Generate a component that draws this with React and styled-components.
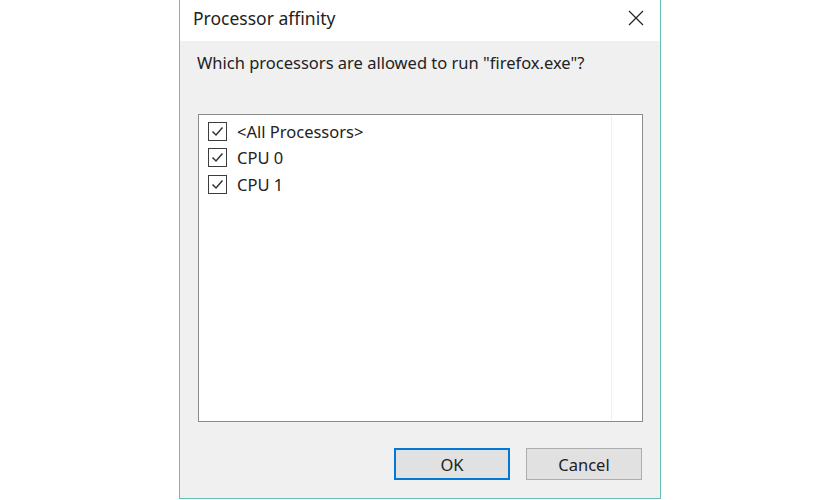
import React, { useState } from "react";
import styled, { createGlobalStyle } from "styled-components";

const GlobalStyle = createGlobalStyle`
  html, body {
    margin: 0;
    padding: 0;
    background: #ffffff;
  }
  body {
    font-family: "Noto Sans", "Open Sans", "Liberation Sans", sans-serif;
    color: #000;
  }
`;

const Page = styled.div`
  width: 840px;
  height: 500px;
  display: flex;
  justify-content: center;
  align-items: flex-start;
  overflow: hidden;
`;

const Dialog = styled.div`
  width: 480px;
  height: 498px;
  border: 1px solid #62c2b8;
  border-top: none;
  background: #f0f0f0;
  display: flex;
  flex-direction: column;
`;

const TitleBar = styled.div`
  height: 41px;
  background: #ffffff;
  display: flex;
  align-items: center;
  justify-content: space-between;
  padding: 0 15px 6px 13px;
  box-sizing: border-box;
`;

const Title = styled.span`
  font-size: 17.5px;
  color: #222;
`;

const CloseButton = styled.button`
  border: none;
  background: transparent;
  padding: 0;
  width: 18px;
  height: 18px;
  display: flex;
  align-items: center;
  justify-content: center;
  cursor: pointer;
`;

const Body = styled.div`
  flex: 1;
  display: flex;
  flex-direction: column;
  padding: 11px 17px 18px 18px;
`;

const Prompt = styled.p`
  margin: 0 0 0 -1px;
  font-size: 16.5px;
  line-height: 22px;
  color: #222;
`;

const ListBox = styled.div`
  margin-top: 40px;
  height: 306px;
  border: 1px solid #8c8c8c;
  background: #ffffff;
  display: grid;
  grid-template-columns: 413px 1fr;
`;

const ItemColumn = styled.div`
  border-right: 1px solid #f0f0f0;
  padding: 3px 9px;
  display: flex;
  flex-direction: column;
`;

const Item = styled.label`
  display: flex;
  align-items: center;
  gap: 10px;
  height: 26.5px;
  font-size: 16.5px;
  color: #222;
  cursor: default;
`;

const Box = styled.span`
  width: 17px;
  height: 17px;
  border: 1px solid #3c3c3c;
  background: #ffffff;
  display: flex;
  align-items: center;
  justify-content: center;
  flex-shrink: 0;
`;

const Footer = styled.div`
  margin-top: auto;
  display: flex;
  justify-content: flex-end;
  gap: 16px;
`;

const Button = styled.button`
  width: 116px;
  height: 32px;
  background: #e1e1e1;
  border: ${(p) => (p.$default ? "2px solid #0078d7" : "1px solid #adadad")};
  font-family: inherit;
  font-size: 16.5px;
  color: #222;
  padding: 0;
  margin-right: ${(p) => (p.$default ? "0" : "1px")};
`;

const processors = ["<All Processors>", "CPU 0", "CPU 1"];

const Check = ({ checked }) => (
  <Box>
    {checked && (
      <svg width="13" height="11" viewBox="0 0 13 11">
        <path d="M1.5 5.5 L5 9 L11.5 1.5" fill="none" stroke="#333" strokeWidth="1.5" />
      </svg>
    )}
  </Box>
);

export default function App() {
  const [checked, setChecked] = useState(processors.map(() => true));

  const toggle = (i) => {
    setChecked((prev) => {
      if (i === 0) {
        const v = !prev[0];
        return prev.map(() => v);
      }
      const next = [...prev];
      next[i] = !next[i];
      next[0] = next.slice(1).every(Boolean);
      return next;
    });
  };

  return (
    <Page>
      <GlobalStyle />
      <Dialog>
        <TitleBar>
          <Title>Processor affinity</Title>
          <CloseButton aria-label="Close">
            <svg width="16" height="16" viewBox="0 0 16 16">
              <path d="M1 1 L15 15 M15 1 L1 15" stroke="#222" strokeWidth="1.2" />
            </svg>
          </CloseButton>
        </TitleBar>
        <Body>
          <Prompt>Which processors are allowed to run "firefox.exe"?</Prompt>
          <ListBox>
            <ItemColumn>
              {processors.map((name, i) => (
                <Item key={name} onClick={() => toggle(i)}>
                  <Check checked={checked[i]} />
                  {name}
                </Item>
              ))}
            </ItemColumn>
            <div />
          </ListBox>
          <Footer>
            <Button $default>OK</Button>
            <Button>Cancel</Button>
          </Footer>
        </Body>
      </Dialog>
    </Page>
  );
}
